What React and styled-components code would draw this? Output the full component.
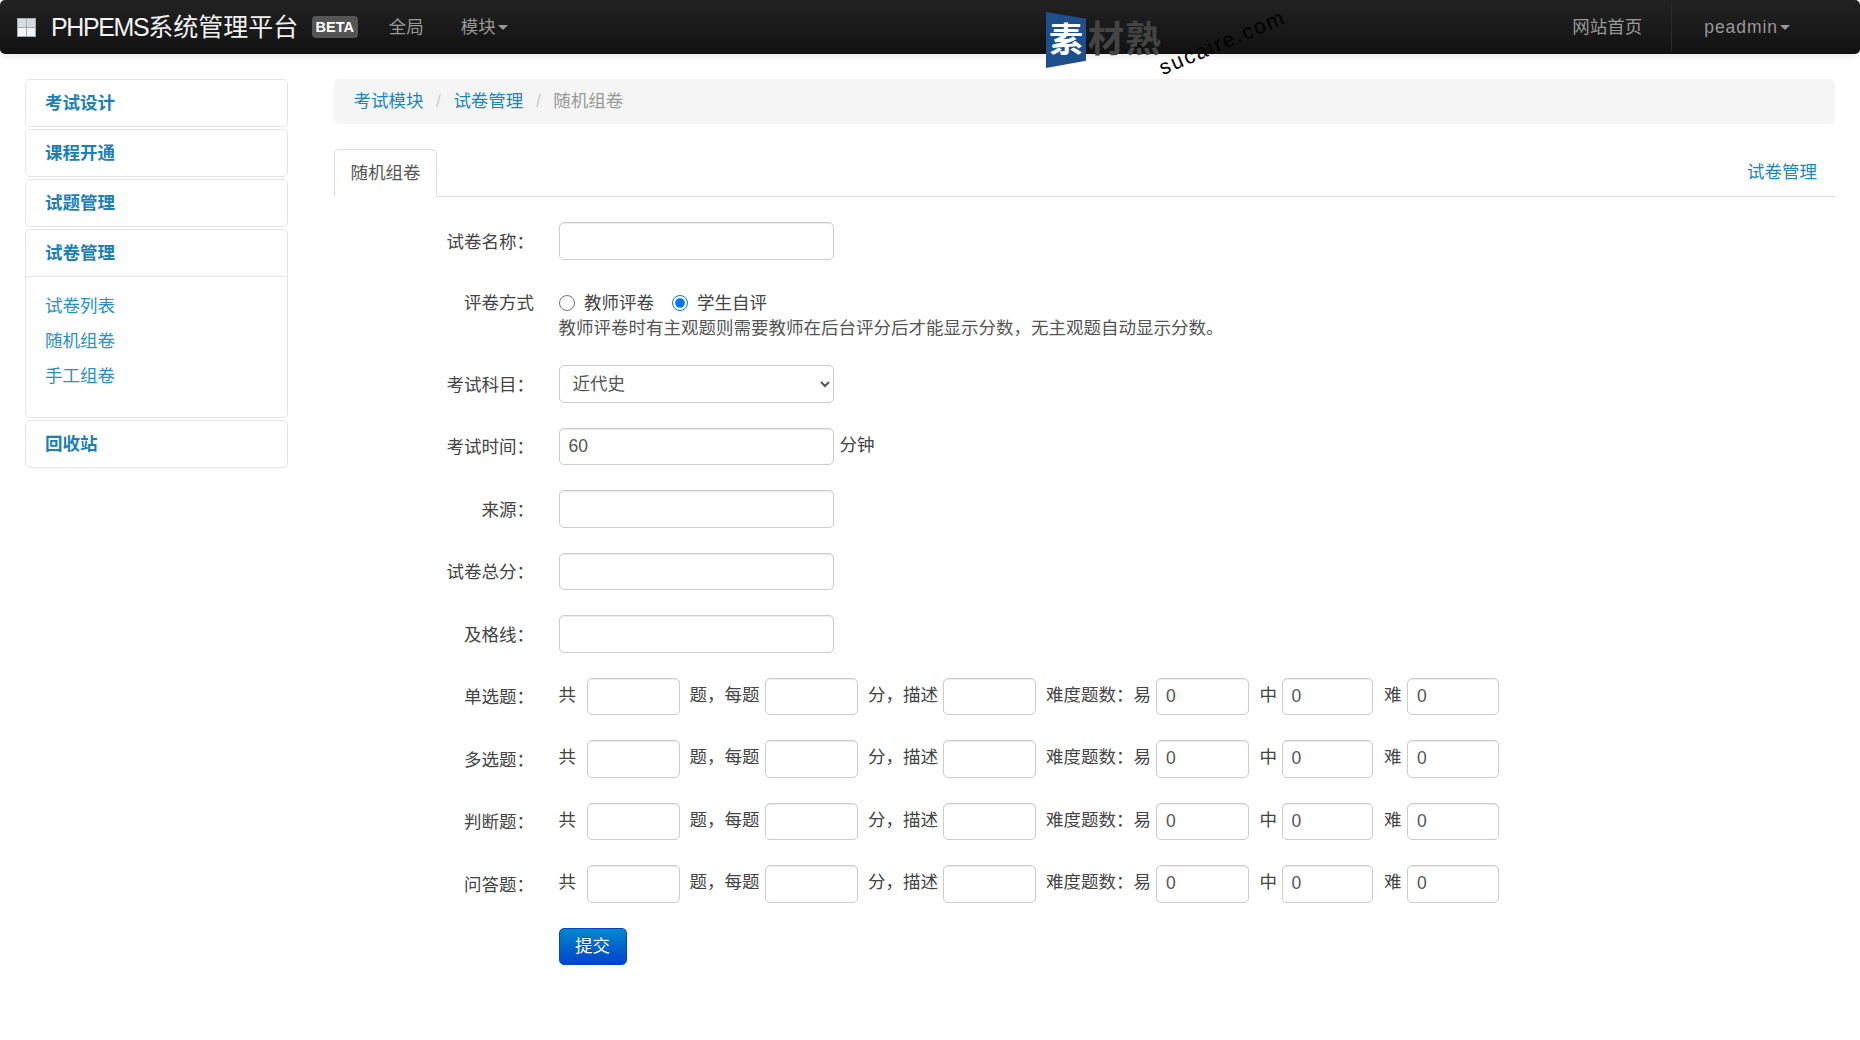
import React from 'react';
import styled, { createGlobalStyle } from 'styled-components';

const GlobalStyle = createGlobalStyle`
  html, body {
    margin: 0;
    padding: 0;
    background: #fff;
    color: #333;
    font: 17.5px/25px "Liberation Sans", "Noto Sans CJK SC", sans-serif;
  }
  * { box-sizing: border-box; }
`;

const Navbar = styled.header`
  position: relative;
  display: flex;
  align-items: center;
  height: 54px;
  padding-left: 17px;
  background: linear-gradient(#222, #111);
  border-radius: 5px;
  box-shadow: 0 2px 8px rgba(0, 0, 0, 0.1);
`;

const BrandIcon = styled.svg`
  width: 19px;
  height: 19px;
  margin-right: 15px;
  flex: none;
`;

const Brand = styled.div`
  color: #f2f2f2;
  font-size: 25px;
  line-height: 54px;
  white-space: nowrap;
  span { letter-spacing: -1.4px; }
`;

const Badge = styled.span`
  margin-left: 13.5px;
  width: 46px;
  height: 22px;
  margin-top: -1px;
  border-radius: 4px;
  background: #555;
  color: #fff;
  font-size: 14.5px;
  font-weight: bold;
  line-height: 22px;
  text-align: center;
`;

const NavLink = styled.a`
  color: #999;
  line-height: 52px;
  white-space: nowrap;
  margin-left: ${p => p.$left || 0}px;
  letter-spacing: ${p => (p.$spaced ? '0.95px' : 'normal')};
`;

const Caret = styled.i`
  display: inline-block;
  width: 0;
  height: 0;
  margin-left: 2px;
  vertical-align: 3px;
  border-top: 5px solid #999;
  border-left: 5px solid transparent;
  border-right: 5px solid transparent;
`;

const NavRight = styled.div`
  display: flex;
  align-items: center;
  margin-left: auto;
  padding-right: 70px;
`;

const NavDivider = styled.div`
  width: 1px;
  height: 48px;
  margin: 0 32px 0 29px;
  background: #2b2b2b;
`;

const Watermark = styled.div`
  position: absolute;
  left: 1046px;
  top: 12px;
  display: flex;
  align-items: center;
  height: 56px;
`;

const WatermarkBadge = styled.div`
  display: flex;
  align-items: center;
  justify-content: center;
  width: 40px;
  height: 56px;
  background: #1d4f8b;
  clip-path: polygon(0 0, 100% 12%, 100% 87%, 0 100%);
  color: #fff;
  font-size: 34px;
  font-weight: bold;
  line-height: 1;
`;

const WatermarkText = styled.span`
  margin-left: 2px;
  color: #444;
  font-size: 36px;
  font-weight: bold;
  letter-spacing: 1px;
  line-height: 1;
`;

const WatermarkTag = styled.span`
  position: absolute;
  left: 118px;
  top: 46px;
  color: #000;
  font-size: 21px;
  letter-spacing: 2px;
  line-height: 20px;
  white-space: nowrap;
  transform: rotate(-23deg);
  transform-origin: left bottom;
`;

const Page = styled.div`
  display: flex;
  align-items: flex-start;
  padding: 25px 25px 0;
`;

const Sidebar = styled.nav`
  flex: none;
  width: 263px;
  margin-right: 45.5px;
`;

const AccordionGroup = styled.div`
  margin-bottom: 2px;
  border: 1px solid #e5e5e5;
  border-radius: 5px;
`;

const AccordionHead = styled.a`
  display: block;
  height: 46px;
  padding-left: 19px;
  color: #1c80b6;
  font-weight: bold;
  line-height: 46px;
`;

const AccordionBody = styled.div`
  height: 141px;
  padding: 12px 0 0 19px;
  border-top: 1px solid #e5e5e5;
`;

const SubLink = styled.a`
  display: block;
  height: 35px;
  color: #2a8fc2;
  line-height: 35px;
`;

const Main = styled.main`
  flex: 1;
  min-width: 0;
`;

const Breadcrumb = styled.div`
  display: flex;
  align-items: center;
  height: 45px;
  margin-bottom: 25px;
  padding-left: 20px;
  border-radius: 5px;
  background: #f5f5f5;
`;

const Crumb = styled.a`
  color: ${p => (p.$active ? '#999' : '#1c86bb')};
`;

const CrumbSep = styled.span`
  padding: 0 12.5px;
  color: #ccc;
`;

const Tabs = styled.div`
  display: flex;
  align-items: stretch;
  justify-content: space-between;
  height: 48px;
  border-bottom: 1px solid #ddd;
`;

const ActiveTab = styled.div`
  height: 48px;
  padding: 11px 15px 0 16px;
  border: 1px solid #ddd;
  border-bottom-color: #fff;
  border-radius: 5px 5px 0 0;
  background: #fff;
  color: #555;
`;

const TabLink = styled.a`
  padding: 11px 18px 0 0;
  color: #1c86bb;
`;

const Form = styled.form`
  padding-top: 25px;
`;

const Row = styled.div`
  display: flex;
  margin-bottom: 25px;
`;

const Label = styled.label`
  flex: none;
  width: 200.5px;
  margin-right: 24.5px;
  padding-top: ${p => (p.$plain ? '6px' : '1.5px')};
  color: #444;
  line-height: ${p => (p.$plain ? '25px' : '36px')};
  text-align: right;
`;

const TextInput = styled.input`
  flex: none;
  width: ${p => p.$width || 275}px;
  height: 37.5px;
  padding: 0 9px;
  border: 1px solid #ccc;
  border-radius: 5px;
  background: #fff;
  box-shadow: inset 0 1px 1px rgba(0, 0, 0, 0.075);
  color: #555;
  font: inherit;
`;

const SubjectSelect = styled.select`
  width: 275px;
  height: 37.5px;
  padding-left: 9px;
  border: 1px solid #ccc;
  border-radius: 5px;
  background: #fff;
  color: #555;
  font: inherit;
`;

const Hint = styled.span`
  margin-left: 6px;
  color: #444;
  line-height: 34px;
`;

const RadioStack = styled.div`
  padding-top: 6px;
  color: #444;
`;

const RadioLine = styled.div`
  display: flex;
  align-items: center;
  height: 25px;
`;

const Radio = styled.input`
  width: 16px;
  height: 16px;
  margin: 0 9.5px 0 ${p => (p.$first ? 0 : 17.5)}px;
`;

const Help = styled.div`
  height: 24.5px;
  padding-top: 0.5px;
  color: #555;
  white-space: nowrap;
`;

const Inline = styled.div`
  display: flex;
  align-items: flex-start;
`;

const InlineText = styled.span`
  flex: none;
  margin: 0 ${p => p.$after}px 0 ${p => p.$before || 0}px;
  color: #444;
  line-height: 34px;
`;

const SubmitButton = styled.button`
  width: 68px;
  height: 37.5px;
  padding: 0;
  border: 1px solid #0044cc;
  border-radius: 5px;
  background: linear-gradient(#0088cc, #0044cc);
  color: #fff;
  font: inherit;
  text-shadow: 0 -1px 0 rgba(0, 0, 0, 0.25);
`;

const menus = ['考试设计', '课程开通', '试题管理'];
const subMenus = ['试卷列表', '随机组卷', '手工组卷'];
const plainFields = ['来源', '试卷总分', '及格线'];
const questionTypes = ['单选题', '多选题', '判断题', '问答题'];

const QuestionRow = ({ name }) => (
  <Row>
    <Label>{name}：</Label>
    <Inline>
      <InlineText $after={11}>共</InlineText>
      <TextInput $width={92.5} />
      <InlineText $before={10} $after={5.5}>题，每题</InlineText>
      <TextInput $width={92.5} />
      <InlineText $before={10.5} $after={5}>分，描述</InlineText>
      <TextInput $width={92.5} />
      <InlineText $before={10.5} $after={5}>难度题数：易</InlineText>
      <TextInput $width={92.5} defaultValue="0" />
      <InlineText $before={11} $after={4.5}>中</InlineText>
      <TextInput $width={91.5} defaultValue="0" />
      <InlineText $before={11} $after={5.5}>难</InlineText>
      <TextInput $width={92} defaultValue="0" />
    </Inline>
  </Row>
);

const App = () => {
  return (
    <>
      <GlobalStyle />
      <Navbar>
        <BrandIcon viewBox="0 0 19 19">
          <rect width="19" height="19" fill="#a5abb2" />
          <rect x="1" y="1" width="8" height="8" fill="#d5dce4" />
          <rect x="10" y="1" width="8" height="8" fill="#d5dce4" />
          <rect x="1" y="10" width="8" height="8" fill="#f1f4f8" />
          <rect x="10" y="10" width="8" height="8" fill="#f1f4f8" />
        </BrandIcon>
        <Brand><span>PHPEMS</span>系统管理平台</Brand>
        <Badge>BETA</Badge>
        <NavLink $left={31}>全局</NavLink>
        <NavLink $left={37}>模块<Caret /></NavLink>
        <Watermark>
          <WatermarkBadge>素</WatermarkBadge>
          <WatermarkText>材熟</WatermarkText>
          <WatermarkTag>sucaire.com</WatermarkTag>
        </Watermark>
        <NavRight>
          <NavLink>网站首页</NavLink>
          <NavDivider />
          <NavLink $spaced>peadmin<Caret /></NavLink>
        </NavRight>
      </Navbar>
      <Page>
        <Sidebar>
          {menus.map(m => (
            <AccordionGroup key={m}><AccordionHead>{m}</AccordionHead></AccordionGroup>
          ))}
          <AccordionGroup>
            <AccordionHead>试卷管理</AccordionHead>
            <AccordionBody>
              {subMenus.map(s => <SubLink key={s}>{s}</SubLink>)}
            </AccordionBody>
          </AccordionGroup>
          <AccordionGroup><AccordionHead>回收站</AccordionHead></AccordionGroup>
        </Sidebar>
        <Main>
          <Breadcrumb>
            <Crumb>考试模块</Crumb>
            <CrumbSep>/</CrumbSep>
            <Crumb>试卷管理</Crumb>
            <CrumbSep>/</CrumbSep>
            <Crumb $active>随机组卷</Crumb>
          </Breadcrumb>
          <Tabs>
            <ActiveTab>随机组卷</ActiveTab>
            <TabLink>试卷管理</TabLink>
          </Tabs>
          <Form>
            <Row>
              <Label>试卷名称：</Label>
              <TextInput />
            </Row>
            <Row>
              <Label $plain>评卷方式</Label>
              <RadioStack>
                <RadioLine>
                  <Radio type="radio" name="mode" $first />教师评卷
                  <Radio type="radio" name="mode" defaultChecked />学生自评
                </RadioLine>
                <Help>教师评卷时有主观题则需要教师在后台评分后才能显示分数，无主观题自动显示分数。</Help>
              </RadioStack>
            </Row>
            <Row>
              <Label>考试科目：</Label>
              <SubjectSelect defaultValue="近代史">
                <option>近代史</option>
              </SubjectSelect>
            </Row>
            <Row>
              <Label>考试时间：</Label>
              <TextInput defaultValue="60" />
              <Hint>分钟</Hint>
            </Row>
            {plainFields.map(f => (
              <Row key={f}>
                <Label>{f}：</Label>
                <TextInput />
              </Row>
            ))}
            {questionTypes.map(q => <QuestionRow key={q} name={q} />)}
            <Row>
              <Label />
              <SubmitButton type="button">提交</SubmitButton>
            </Row>
          </Form>
        </Main>
      </Page>
    </>
  );
};

export default App;
